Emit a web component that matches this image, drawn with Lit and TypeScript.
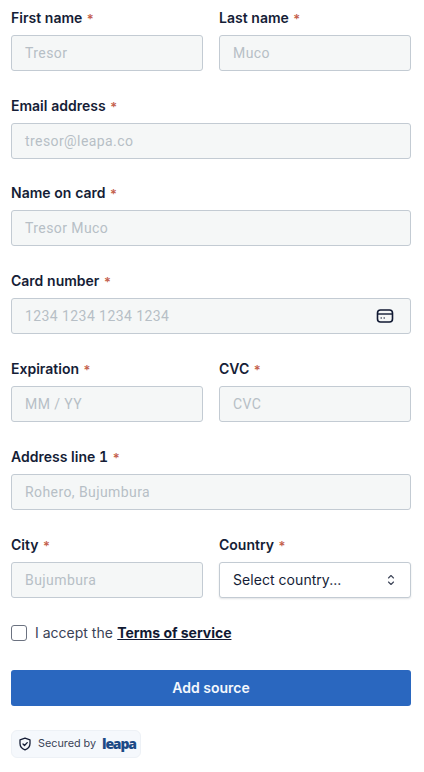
import { LitElement, html, css } from "lit";
import { customElement } from "lit/decorators.js";

const star = html`<span class="req">*</span>`;

@customElement("app-root")
export class AppRoot extends LitElement {
  static styles = css`
    :host { display: block; width: 424px; height: 772px; background: #fff; font-family: Inter, "Liberation Sans", sans-serif; color: #111a33; overflow: hidden; }
    * { box-sizing: border-box; }
    form { display: flex; flex-direction: column; padding: 7.8px 13px 0 11px; }
    .row { display: grid; grid-template-columns: 192px 192px; column-gap: 16px; height: 87.8px; }
    .row.one { grid-template-columns: 400px; }
    .label { height: 20px; line-height: 20px; font-size: 14px; font-weight: 600; color: #151d36; white-space: nowrap; margin-bottom: 7px; font-feature-settings: "tnum"; }
    .req { color: #c4604c; font-weight: 600; font-size: 13px; vertical-align: -1px; }
    .input { height: 36px; border: 1px solid #c3cbd3; border-radius: 3px; background: #f5f7f7; padding: 0 16px 0 13px; display: flex; align-items: center; justify-content: space-between; font-family: Roboto, sans-serif; font-size: 14px; color: #b7bfc6; letter-spacing: .42px; }
    .input svg { display: block; }
    .select { background: #fff; color: #151d36; font-family: Inter, sans-serif; box-shadow: 0 1px 2px rgba(20,30,50,.12); font-weight: 400; letter-spacing: .05px; padding-right: 14px; }
    .check { display: flex; align-items: center; gap: 8px; height: 16px; margin-top: 2.6px; font-size: 14px; color: #3a4256; }
    .box { width: 16px; height: 16px; border: 1px solid #6b7280; border-radius: 3px; background: #fff; }
    .check a { color: #111a33; font-weight: 700; text-decoration: underline; letter-spacing: -.03px; margin-left: .5px; }
    .btn { margin-top: 29px; height: 36px; border-radius: 3px; background: #2a67bf; color: #f4f7fc; font-size: 14px; font-weight: 600; display: flex; align-items: center; justify-content: center; }
    .badge { margin-top: 24px; width: 130px; height: 28px; border: 1px solid #edf1f6; border-radius: 6px; background: #f5f8fc; display: flex; align-items: center; padding-left: 6px; font-size: 10.8px; color: #3a4256; }
    .badge svg { margin-right: 6px; }
    .logo { margin-left: 6px; font-size: 14px; font-weight: 800; color: #1c4a86; letter-spacing: -1.2px; font-family: "Open Sans", Inter, sans-serif; }
  `;

  field(label: string, ph: string, extra?: unknown) {
    return html`<div><div class="label">${label} ${star}</div><div class="input"><span>${ph}</span>${extra ?? ""}</div></div>`;
  }

  render() {
    const card = html`<svg width="18" height="18" viewBox="0 0 18 18" fill="none" stroke="#111a33" stroke-width="1.6"><rect x="1.5" y="3" width="15" height="12" rx="3"/><path d="M1.5 7h15" stroke-width="1.4"/><path d="M4.5 11h1.5M7.5 11h1.5" stroke-width="1.2"/></svg>`;
    return html`<form>
      <div class="row">${this.field("First name", "Tresor")}${this.field("Last name", "Muco")}</div>
      <div class="row one">${this.field("Email address", "tresor@leapa.co")}</div>
      <div class="row one">${this.field("Name on card", "Tresor Muco")}</div>
      <div class="row one">${this.field("Card number", "1234 1234 1234 1234", card)}</div>
      <div class="row">${this.field("Expiration", "MM / YY")}${this.field("CVC", "CVC")}</div>
      <div class="row one">${this.field("Address line 1", "Rohero, Bujumbura")}</div>
      <div class="row">
        ${this.field("City", "Bujumbura")}
        <div><div class="label">Country ${star}</div><div class="input select"><span>Select country...</span>
          <svg width="10" height="14" viewBox="0 0 10 14" fill="none" stroke="#3f475a" stroke-width="1.15" stroke-linecap="round" stroke-linejoin="round"><path d="M2.5 5L5 2.5 7.5 5M2.5 9L5 11.5 7.5 9"/></svg></div></div>
      </div>
      <div class="check"><span class="box"></span><span>I accept the <a>Terms of service</a></span></div>
      <div class="btn">Add source</div>
      <div class="badge">
        <svg width="14" height="14" viewBox="0 0 14 14" fill="none" stroke="#151d36" stroke-width="1.3" stroke-linecap="round" stroke-linejoin="round"><path d="M7 1.2l5 1.7v3.6c0 3-2.1 5.2-5 6.3-2.9-1.1-5-3.3-5-6.3V2.9z"/><path d="M5 7l1.5 1.5L9.2 5.6"/></svg>
        <span>Secured by</span><span class="logo">leapa</span>
      </div>
    </form>`;
  }
}
